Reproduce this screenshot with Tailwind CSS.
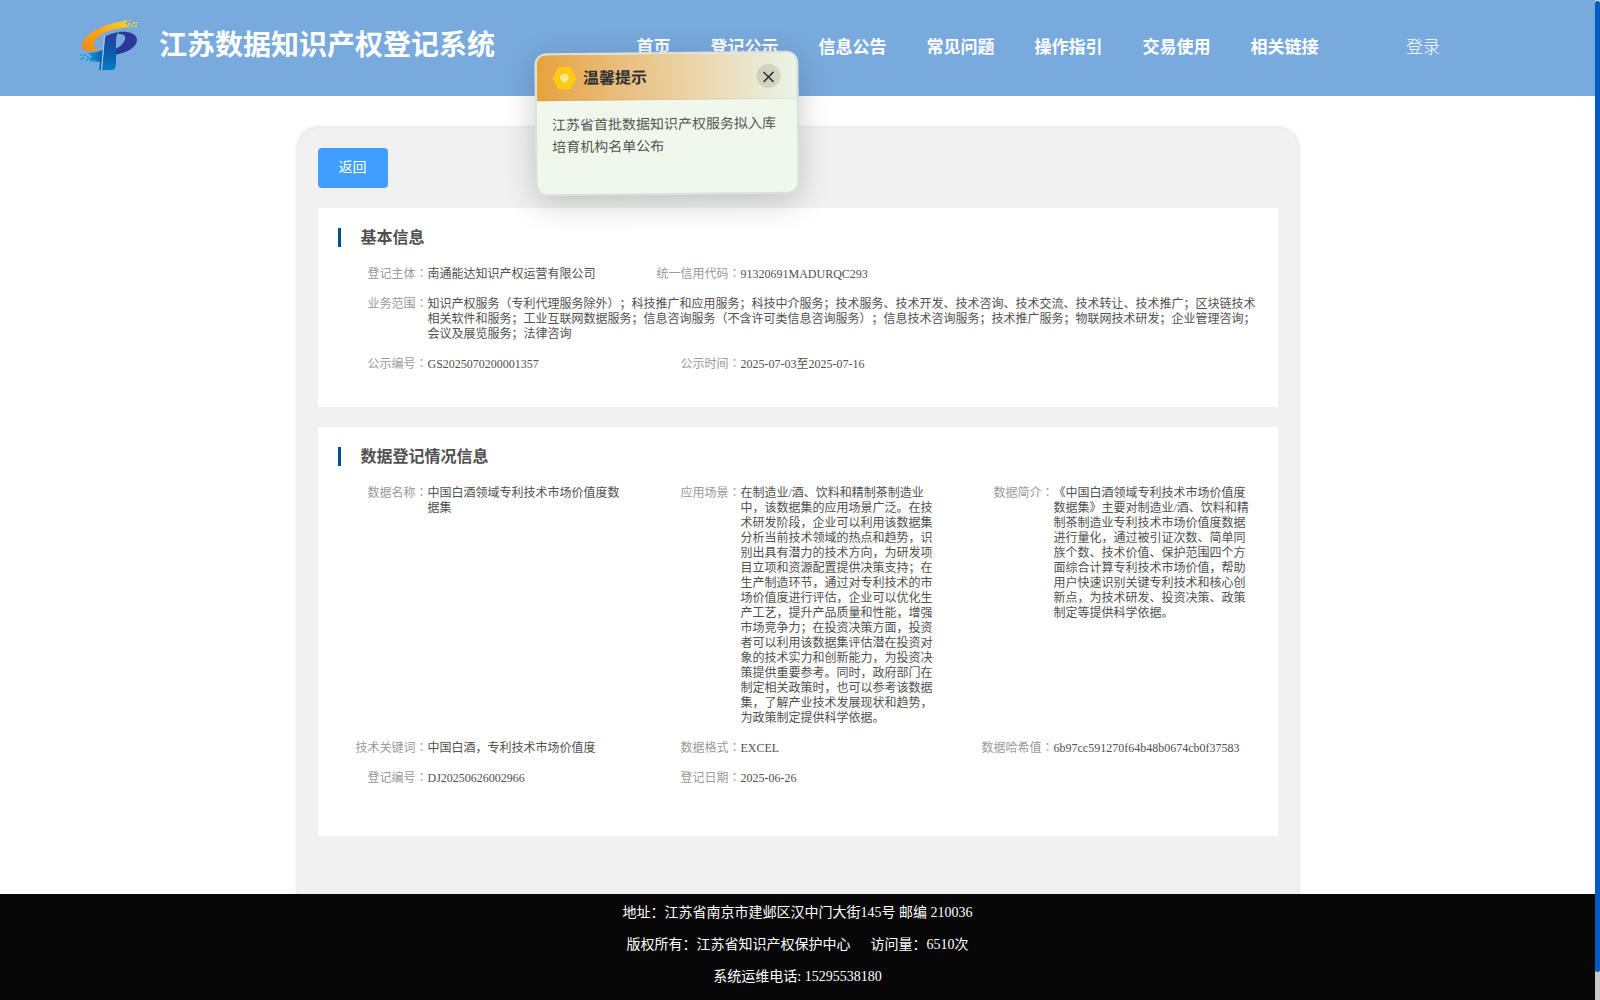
<!DOCTYPE html>
<html lang="zh-CN">
<head>
<meta charset="utf-8">
<title>江苏数据知识产权登记系统</title>
<script src="https://cdn.jsdelivr.net/npm/@tailwindcss/browser@4"></script>
</head>
<body class="relative flex h-[1000px] w-[1600px] overflow-hidden bg-white font-['Liberation_Serif','Noto_Sans_CJK_SC',sans-serif] whitespace-nowrap [text-spacing-trim:space-all]">
<div class="flex h-full w-[1595px] flex-col">
  <header class="flex h-24 shrink-0 items-center bg-[#79aadd] text-white">
    <svg class="mb-1 ml-[79px] h-[54px] w-[62px] shrink-0" viewBox="0 0 62 54">
      <defs>
        <linearGradient id="o" x1="0" y1="1" x2="1" y2="0"><stop offset="0" stop-color="#f08a10"/><stop offset=".5" stop-color="#f9a21b"/><stop offset="1" stop-color="#fbd423"/></linearGradient>
        <linearGradient id="b" x1="0" y1="0" x2="0" y2="1"><stop offset="0" stop-color="#2b3d9b"/><stop offset=".55" stop-color="#0a5cad"/><stop offset="1" stop-color="#087cc4"/></linearGradient>
        <linearGradient id="c" x1="0" y1="0" x2="1" y2="0"><stop offset="0" stop-color="#169bdc"/><stop offset="1" stop-color="#075caa"/></linearGradient>
      </defs>
      <path d="M46 2C29 4 5 13 3 26C2 33 12 33 21 31C11 28 14 21 23 15C31 10 43 9 51 8L47 5Z" fill="url(#o)"/>
      <path d="M46 1h2v2h-2zM50 1h2v1h-2zM49 4h2v2h-2zM54 3h2v2h-2zM52 6h2v2h-2zM57 3h2v1h-2zM56 6h2v2h-2z" fill="#fbd423"/>
      <path d="M40 15C47 15 48 19 44 24C41 28 37 30 35 30V36C48 34 58 28 58 21C58 14 48 12 40 13Z" fill="#2b3896"/>
      <path d="M27 17Q33 14 40 13Q37 16 37 21V43Q37 50 34 51H23L26 19Z" fill="url(#b)"/>
      <path d="M9 34Q17 34 24 31L22 51H20L21 43Q15 43 9 40L13 38Z" fill="url(#c)"/>
      <path d="M25.500 17L22.500 51" stroke="#b7d5ef" stroke-width=".8"/>
      <path d="M1 36h2v1h-2zM5 35h2v2h-2zM3 38h2v2h-2zM8 37h2v2h-2zM1 40h2v1h-2zM7 40h2v2h-2zM11 41h2v2h-2zM15 41h2v2h-2z" fill="#189ee0"/>
    </svg>
    <h1 class="ml-[18px] w-[336.500px] -translate-y-[2px] text-[28px] leading-10 font-bold">江苏数据知识产权登记系统</h1>
    <nav class="ml-[141px] flex gap-10 text-[17px] leading-6 font-bold">
      <a>首页</a><a>登记公示</a><a>信息公告</a><a>常见问题</a><a>操作指引</a><a>交易使用</a><a>相关链接</a>
    </nav>
    <a class="ml-[87.500px] text-[17px] leading-6 font-light">登录</a>
  </header>

  <main class="flex min-h-0 grow justify-center pt-[31.500px]">
    <div class="h-[900px] w-[1000px] shrink-0 rounded-[20px] bg-[#f1f1f1] px-5 pt-[20.500px] shadow-[0_0_4px_rgba(0,0,0,0.2)]">
      <button class="flex h-10 w-[70px] items-center justify-center rounded bg-[#409eff] text-sm text-white">返回</button>

      <section class="mt-5 h-[199px] bg-white pt-5 text-xs leading-[15px] text-[#505050]">
        <h2 class="ml-5 flex h-[19px] items-center border-l-[3px] border-[#00508e] pl-5 text-base font-bold">基本信息</h2>
        <div class="mt-5 ml-5 grid grid-cols-[313px_313px_303px] gap-y-[15px]">
          <div class="flex h-[15px]"><span class="w-[90px] text-right text-[#999]">登记主体<span class="font-['Liberation_Serif','Noto_Sans_CJK_TC']" lang="zh-TW">：</span></span><span>南通能达知识产权运营有限公司</span></div>
          <div class="flex h-[15px]"><span class="w-[90px] text-right text-[#999]">统一信用代码<span class="font-['Liberation_Serif','Noto_Sans_CJK_TC']" lang="zh-TW">：</span></span><span>91320691MADURQC293</span></div>
          <div></div>
          <div class="col-span-3 flex h-[45px]"><span class="w-[90px] text-right text-[#999]">业务范围<span class="font-['Liberation_Serif','Noto_Sans_CJK_TC']" lang="zh-TW">：</span></span><span>知识产权服务（专利代理服务除外）；科技推广和应用服务；科技中介服务；技术服务、技术开发、技术咨询、技术交流、技术转让、技术推广；区块链技术<br>相关软件和服务；工业互联网数据服务；信息咨询服务（不含许可类信息咨询服务）；信息技术咨询服务；技术推广服务；物联网技术研发；企业管理咨询；<br>会议及展览服务；法律咨询</span></div>
          <div class="flex h-[15px]"><span class="w-[90px] text-right text-[#999]">公示编号<span class="font-['Liberation_Serif','Noto_Sans_CJK_TC']" lang="zh-TW">：</span></span><span>GS2025070200001357</span></div>
          <div class="flex h-[15px]"><span class="w-[90px] text-right text-[#999]">公示时间<span class="font-['Liberation_Serif','Noto_Sans_CJK_TC']" lang="zh-TW">：</span></span><span>2025-07-03至2025-07-16</span></div>
        </div>
      </section>

      <section class="mt-5 h-[409px] bg-white pt-5 text-xs leading-[15px] text-[#505050]">
        <h2 class="ml-5 flex h-[19px] items-center border-l-[3px] border-[#00508e] pl-5 text-base font-bold">数据登记情况信息</h2>
        <div class="mt-5 ml-5 grid grid-cols-[313px_313px_303px] gap-y-[15px]">
          <div class="flex"><span class="w-[90px] text-right text-[#999]">数据名称<span class="font-['Liberation_Serif','Noto_Sans_CJK_TC']" lang="zh-TW">：</span></span><span>中国白酒领域专利技术市场价值度数<br>据集</span></div>
          <div class="flex h-[240px]"><span class="w-[90px] text-right text-[#999]">应用场景<span class="font-['Liberation_Serif','Noto_Sans_CJK_TC']" lang="zh-TW">：</span></span><span>在制造业/酒、饮料和精制茶制造业<br>中，该数据集的应用场景广泛。在技<br>术研发阶段，企业可以利用该数据集<br>分析当前技术领域的热点和趋势，识<br>别出具有潜力的技术方向，为研发项<br>目立项和资源配置提供决策支持；在<br>生产制造环节，通过对专利技术的市<br>场价值度进行评估，企业可以优化生<br>产工艺，提升产品质量和性能，增强<br>市场竞争力；在投资决策方面，投资<br>者可以利用该数据集评估潜在投资对<br>象的技术实力和创新能力，为投资决<br>策提供重要参考。同时，政府部门在<br>制定相关政策时，也可以参考该数据<br>集，了解产业技术发展现状和趋势，<br>为政策制定提供科学依据。</span></div>
          <div class="flex"><span class="w-[90px] text-right text-[#999]">数据简介<span class="font-['Liberation_Serif','Noto_Sans_CJK_TC']" lang="zh-TW">：</span></span><span>《中国白酒领域专利技术市场价值度<br>数据集》主要对制造业/酒、饮料和精<br>制茶制造业专利技术市场价值度数据<br>进行量化，通过被引证次数、简单同<br>族个数、技术价值、保护范围四个方<br>面综合计算专利技术市场价值，帮助<br>用户快速识别关键专利技术和核心创<br>新点，为技术研发、投资决策、政策<br>制定等提供科学依据。</span></div>
          <div class="flex h-[15px]"><span class="w-[90px] text-right text-[#999]">技术关键词<span class="font-['Liberation_Serif','Noto_Sans_CJK_TC']" lang="zh-TW">：</span></span><span>中国白酒，专利技术市场价值度</span></div>
          <div class="flex h-[15px]"><span class="w-[90px] text-right text-[#999]">数据格式<span class="font-['Liberation_Serif','Noto_Sans_CJK_TC']" lang="zh-TW">：</span></span><span>EXCEL</span></div>
          <div class="flex h-[15px]"><span class="w-[90px] text-right text-[#999]">数据哈希值<span class="font-['Liberation_Serif','Noto_Sans_CJK_TC']" lang="zh-TW">：</span></span><span>6b97cc591270f64b48b0674cb0f37583</span></div>
          <div class="flex h-[15px]"><span class="w-[90px] text-right text-[#999]">登记编号<span class="font-['Liberation_Serif','Noto_Sans_CJK_TC']" lang="zh-TW">：</span></span><span>DJ20250626002966</span></div>
          <div class="flex h-[15px]"><span class="w-[90px] text-right text-[#999]">登记日期<span class="font-['Liberation_Serif','Noto_Sans_CJK_TC']" lang="zh-TW">：</span></span><span>2025-06-26</span></div>
        </div>
      </section>
    </div>
  </main>

  <footer class="z-10 flex h-[106px] shrink-0 flex-col items-center bg-[#070707] pt-[3px] text-sm leading-8 text-white">
    <p>地址：江苏省南京市建邺区汉中门大街145号 邮编 210036</p>
    <p>版权所有：江苏省知识产权保护中心<span class="ml-5">访问量：6510次</span></p>
    <p>系统运维电话: 15295538180</p>
  </footer>
</div>
<div class="h-full w-[5px] bg-[#c8c8c8] pt-px"><div class="h-[971px] rounded-sm bg-[#005bc2]"></div></div>

<aside class="absolute top-[51.500px] left-[534.500px] z-20 h-[143px] w-[263.500px] -rotate-[0.6deg] overflow-hidden rounded-xl border-2 border-[#dcdfe0] bg-[#f0f8ec] shadow-[0_8px_32px_rgba(0,0,0,0.2)]">
  <div class="flex h-[46px] items-center border-b border-black/5 bg-linear-to-r from-[#e6a23c] to-[#e9f4e8] pr-4 pl-[15.500px]">
    <svg class="h-6 w-6" viewBox="0 0 24 24"><path d="M6 1H18L24 12L18 23H6L0 12Z" fill="#ffc914"/><g fill="none" stroke="#fff2bd" stroke-width="1"><path d="M10 14.500C7 12 8 8.500 12 8.500S17 12 14 14.500Z" fill="#ffe278"/><path d="M10 16h4M11 11l1 1 1-1M12 12v3"/></g></svg>
    <strong class="mt-0.5 ml-[7px] text-base text-[#303133]">温馨提示</strong>
    <span class="ml-auto flex h-6 w-6 items-center justify-center rounded-full bg-black/10"><svg class="mt-[3px] h-3 w-3" viewBox="0 0 12 12"><path d="M1 1L11 11M11 1L1 11" stroke="#333" stroke-width="1.500"/></svg></span>
  </div>
  <p class="px-[15px] pt-[14px] text-sm leading-[22.400px] text-[#555]">江苏省首批数据知识产权服务拟入库<br>培育机构名单公布</p>
</aside>
</body>
</html>
